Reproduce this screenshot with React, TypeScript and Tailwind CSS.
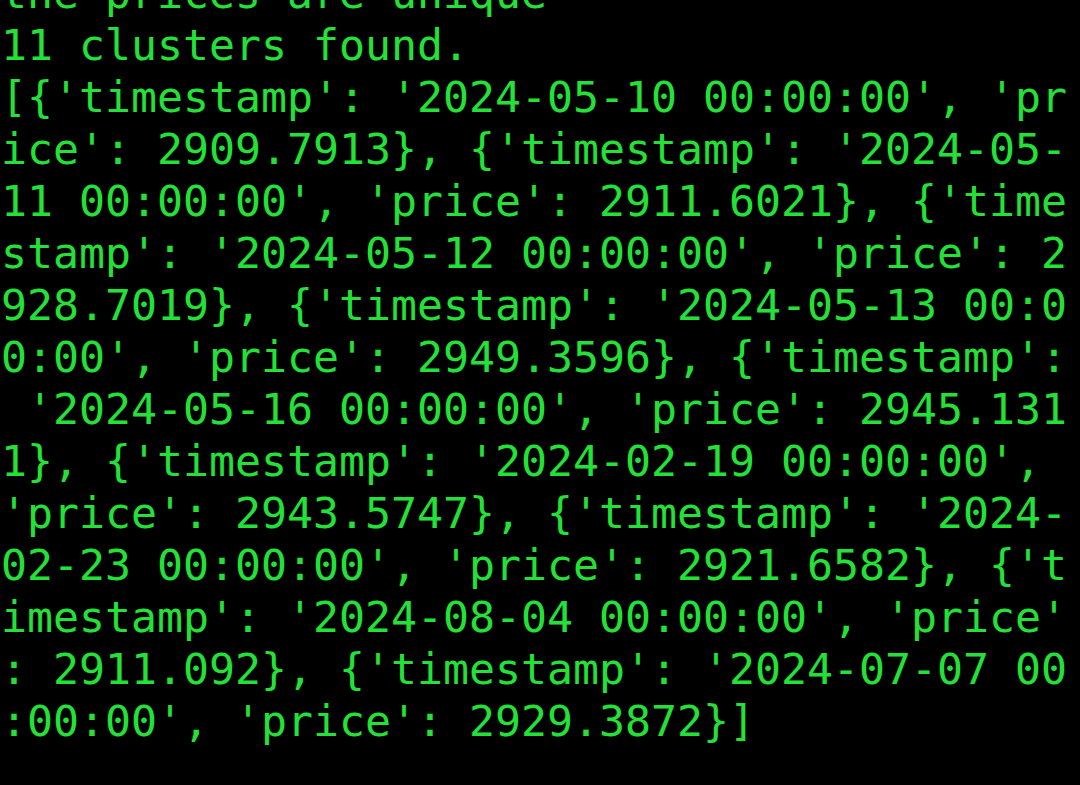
const rows = [
  "the prices are unique",
  "11 clusters found.",
  "[{'timestamp': '2024-05-10 00:00:00', 'pr",
  "ice': 2909.7913}, {'timestamp': '2024-05-",
  "11 00:00:00', 'price': 2911.6021}, {'time",
  "stamp': '2024-05-12 00:00:00', 'price': 2",
  "928.7019}, {'timestamp': '2024-05-13 00:0",
  "0:00', 'price': 2949.3596}, {'timestamp':",
  " '2024-05-16 00:00:00', 'price': 2945.131",
  "1}, {'timestamp': '2024-02-19 00:00:00', ",
  "'price': 2943.5747}, {'timestamp': '2024-",
  "02-23 00:00:00', 'price': 2921.6582}, {'t",
  "imestamp': '2024-08-04 00:00:00', 'price'",
  ": 2911.092}, {'timestamp': '2024-07-07 00",
  ":00:00', 'price': 2929.3872}]",
];

export default function App() {
  return (
    <div className="h-[785px] w-[1080px] overflow-hidden bg-black">
      <div className="-mt-[33px] pl-[1px] font-['DejaVu_Sans_Mono',monospace] text-[43.2px] leading-[52px] text-[#22e238]">
        {rows.map((row, i) => (
          <div className="whitespace-pre" key={i}>
            {row}
          </div>
        ))}
      </div>
    </div>
  );
}
